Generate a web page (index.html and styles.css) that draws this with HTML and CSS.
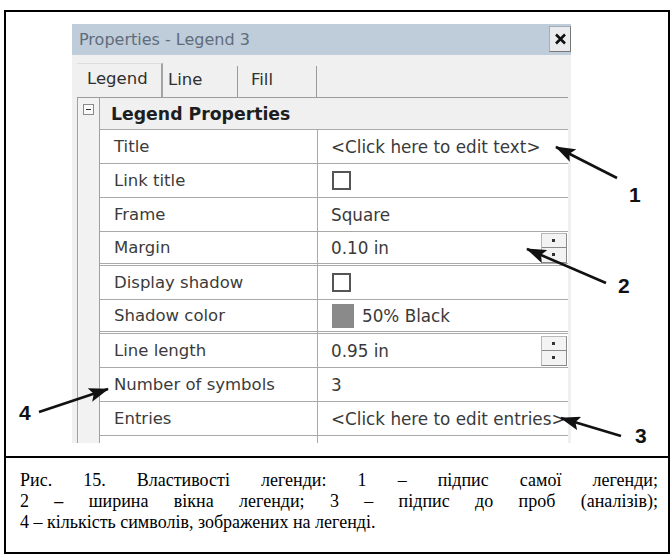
FILE: index.html
```html
<!DOCTYPE html>
<html lang="uk">
<head>
<meta charset="utf-8">
<title>Рис. 15</title>
<link rel="stylesheet" href="styles.css">
</head>
<body>
<div class="figure">
  <div class="stage">
    <div class="panel">
      <div class="titlebar">
        <span class="title-text">Properties - Legend 3</span>
        <span class="close">
          <svg width="13" height="12" viewBox="0 0 13 12"><path d="M2 1.5 L11 10.5 M11 1.5 L2 10.5" stroke="#111" stroke-width="2.6" fill="none"/></svg>
        </span>
      </div>
      <div class="tabs">
        <div class="tab active">Legend</div>
        <div class="tab t-line">Line</div>
        <div class="tab t-fill">Fill</div>
      </div>
      <div class="grid">
        <div class="row head">
          <div class="gut"><span class="minus"></span></div>
          <div class="cell span">Legend Properties</div>
        </div>
        <div class="row">
          <div class="gut"></div>
          <div class="cell name">Title</div>
          <div class="cell val">&lt;Click here to edit text&gt;</div>
        </div>
        <div class="row">
          <div class="gut"></div>
          <div class="cell name">Link title</div>
          <div class="cell val"><span class="check"></span></div>
        </div>
        <div class="row">
          <div class="gut"></div>
          <div class="cell name">Frame</div>
          <div class="cell val">Square</div>
        </div>
        <div class="row sep">
          <div class="gut"></div>
          <div class="cell name">Margin</div>
          <div class="cell val spinrow">0.10 in<span class="spin"><i class="up"></i><i class="dn"></i></span></div>
        </div>
        <div class="row">
          <div class="gut"></div>
          <div class="cell name">Display shadow</div>
          <div class="cell val"><span class="check"></span></div>
        </div>
        <div class="row sep">
          <div class="gut"></div>
          <div class="cell name">Shadow color</div>
          <div class="cell val"><span class="swatch"></span>50% Black</div>
        </div>
        <div class="row">
          <div class="gut"></div>
          <div class="cell name">Line length</div>
          <div class="cell val spinrow">0.95 in<span class="spin"><i class="up"></i><i class="dn"></i></span></div>
        </div>
        <div class="row">
          <div class="gut"></div>
          <div class="cell name">Number of symbols</div>
          <div class="cell val">3</div>
        </div>
        <div class="row">
          <div class="gut"></div>
          <div class="cell name">Entries</div>
          <div class="cell val">&lt;Click here to edit entries&gt;</div>
        </div>
        <div class="row tail">
          <div class="gut"></div>
          <div class="cell name"></div>
          <div class="cell val"></div>
        </div>
      </div>
    </div>

    <!-- callout arrows and their numbers -->
    <svg class="callouts" width="662" height="444" viewBox="0 0 662 444">
      <defs>
        <marker id="head" markerUnits="userSpaceOnUse" markerWidth="20" markerHeight="14" refX="19" refY="7" orient="auto">
          <path d="M0 0 L20 7 L0 14 L4 7 Z" fill="#111"/>
        </marker>
      </defs>
      <g stroke="#111" stroke-width="2.6" fill="none">
        <line x1="611" y1="166" x2="550" y2="135" marker-end="url(#head)"/>
        <line x1="600" y1="271" x2="521" y2="237" marker-end="url(#head)"/>
        <line x1="615" y1="424" x2="555" y2="406" marker-end="url(#head)"/>
        <line x1="33" y1="400" x2="102" y2="377" marker-end="url(#head)"/>
      </g>
      <g class="num">
        <text x="623" y="190">1</text>
        <text x="612" y="281">2</text>
        <text x="629" y="431">3</text>
        <text x="13" y="408">4</text>
      </g>
    </svg>
  </div>
  <div class="caption">
    <span class="ln">Рис. 15. Властивості легенди: 1 – підпис самої легенди;</span>
    <span class="ln">2 <b class="dash">–</b> ширина вікна легенди; 3 – підпис до проб (аналізів);</span>
    <span class="ln last">4 – кількість символів, зображених на легенді.</span>
  </div>
</div>
</body>
</html>
```
FILE: styles.css
```css
html, body {
  margin: 0;
  padding: 0;
  background: #fff;
}

.figure {
  margin: 10px 0 0 4px;
  width: 662px;
  border: 2px solid #000;
}

.stage {
  position: relative;
  height: 444px;
  padding: 12px 0 0 66px;
  box-sizing: border-box;
}

/* properties window */
.panel {
  width: 499px;
  height: 419px;
  overflow: hidden;
  background: #f0f0f0;
  font-family: "DejaVu Sans", sans-serif;
  font-size: 16.5px;
  color: #3b3b3b;
}

.titlebar {
  height: 31px;
  background: #bfccd9;
  display: flex;
  align-items: center;
  justify-content: space-between;
  padding: 0 0 0 7px;
}

.title-text {
  font-size: 16px;
  color: #5f6d7c;
}

.close {
  width: 22px;
  height: 26px;
  box-sizing: border-box;
  border: 1px solid #a5acb5;
  border-right-color: #777;
  border-bottom-color: #777;
  background: #e9ebee;
  display: flex;
  align-items: center;
  justify-content: center;
  align-self: flex-start;
  margin-top: 2px;
}

.tabs {
  height: 42px;
  display: flex;
  align-items: flex-end;
  padding-left: 5px;
  box-sizing: border-box;
}

.tab {
  height: 31px;
  box-sizing: border-box;
  display: flex;
  align-items: center;
  padding-bottom: 4px;
  border-right: 1px solid #9a9a9a;
  color: #2f2f2f;
  font-size: 16.5px;
}

.tab.active {
  height: 34px;
  width: 86px;
  padding-left: 10px;
  border-right: 2px solid #a3a3a3;
  border-top: 1px solid #dedede;
}

.tab.t-line {
  width: 75px;
  padding-left: 5px;
}

.tab.t-fill {
  width: 79px;
  padding-left: 13px;
}

/* property grid */
.grid {
  margin-left: 5px;
  width: 491px;
  border-top: 1px solid #9c9c9c;
}

.row {
  display: grid;
  grid-template-columns: 23px 218px 250px;
  height: 34px;
}

.gut {
  background: #f2f2f2;
  border-left: 1px solid #a0a0a0;
  border-right: 1px solid #a0a0a0;
  box-sizing: border-box;
}

.cell {
  display: flex;
  align-items: center;
  box-sizing: border-box;
  background: #fff;
  border-bottom: 1px solid #a9a9a9;
  white-space: nowrap;
}

.name {
  padding-left: 14px;
  border-right: 1px solid #a9a9a9;
}

.val {
  padding-left: 13px;
  color: #3a3a3a;
  font-size: 16.8px;
}

.row.head {
  height: 32px;
}

.row.head .gut {
  display: flex;
  justify-content: center;
  padding-top: 6px;
}

.cell.span {
  grid-column: 2 / 4;
  background: #f0f0f0;
  padding-left: 11px;
  font-weight: bold;
  font-size: 17.3px;
  color: #1e1e1e;
}

.row.sep .cell {
  border-bottom: 3px double #a9a9a9;
}

.row.tail {
  height: 12px;
}

.row.tail .cell {
  border-bottom: 0;
}

.minus {
  width: 11px;
  height: 11px;
  box-sizing: border-box;
  border: 1px solid #8a8a8a;
  background: #fafafa;
  position: relative;
}

.minus::after {
  content: "";
  position: absolute;
  left: 2px;
  right: 2px;
  top: 4px;
  height: 1px;
  background: #333;
}

.check {
  width: 19px;
  height: 19px;
  box-sizing: border-box;
  border: 2px solid #555;
  background: #fff;
  margin-left: 1px;
}

.swatch {
  width: 22px;
  height: 24px;
  background: #8a8a8a;
  margin-left: 1px;
  margin-right: 8px;
}

.spinrow {
  justify-content: space-between;
  padding-right: 1px;
}

.spin {
  width: 26px;
  height: 30px;
  box-sizing: border-box;
  border: 1px solid #b8b8b8;
  border-right-color: #8a8a8a;
  border-bottom-color: #8a8a8a;
  background: #f3f3f3;
  display: flex;
  flex-direction: column;
}

.spin i {
  flex: 1;
  position: relative;
}

.spin i.up {
  border-bottom: 1px solid #8a8a8a;
}

.spin i::after {
  content: "";
  position: absolute;
  left: 10px;
  top: 5px;
  width: 3px;
  height: 3px;
  background: #333;
}

.callouts {
  position: absolute;
  left: 0;
  top: 0;
}

.num text {
  font-family: "Liberation Sans", Arial, sans-serif;
  font-weight: bold;
  font-size: 21px;
  fill: #111;
}

/* figure caption */
.caption {
  border-top: 2px solid #000;
  height: 96px;
  box-sizing: border-box;
  padding: 12px 10px 0 14px;
  font-family: "Liberation Serif", "Times New Roman", serif;
  font-size: 18px;
  line-height: 21px;
  color: #000;
}

.caption .ln {
  display: block;
  text-align: justify;
  text-align-last: justify;
}

.caption .ln.last {
  text-align-last: left;
}

.caption b.dash {
  font-weight: bold;
}
```
